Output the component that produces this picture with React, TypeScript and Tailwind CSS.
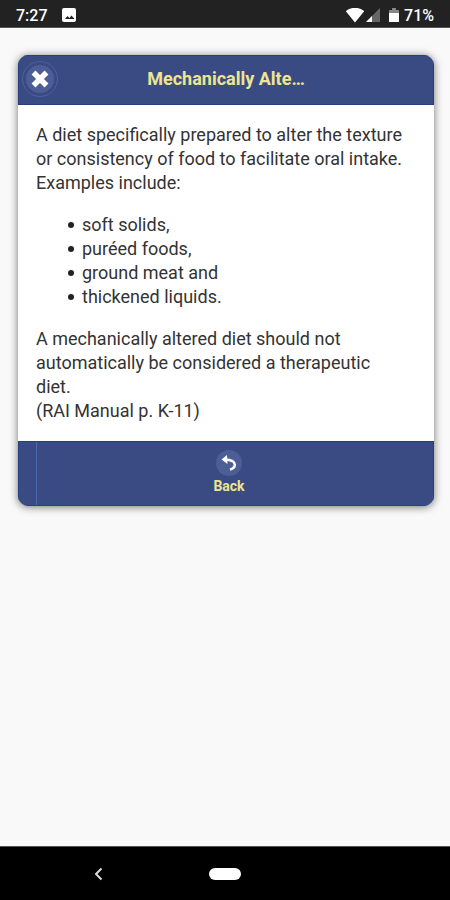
const examples = ['soft solids,', 'puréed foods,', 'ground meat and', 'thickened liquids.'];

function StatusBar() {
  return (
    <div className="flex h-7 items-center justify-between border-b border-[#555555] bg-[#222222] px-4 pt-1 text-base font-medium text-white">
      <div className="flex items-center gap-3">
        <span>7:27</span>
        <svg className="size-4" viewBox="0 0 16 16" aria-hidden="true">
          <rect x="2" y="0" width="14" height="14" rx="2" fill="#fff" />
          <path d="M5 11l2.500-3 2 2 2-2.500 3 3.500z" fill="#222" />
        </svg>
      </div>
      <div className="flex items-center gap-1">
        <svg className="h-4 w-5" viewBox="0 0 20 16" aria-hidden="true">
          <path d="M11 14.500L1.800 3.200C4.500.9 7.600-.2 11-.2s6.500 1.100 9.200 3.400z" fill="#fff" />
        </svg>
        <svg className="-ml-1 size-4" viewBox="0 0 16 16" aria-hidden="true">
          <path d="M16 0v14H2z" fill="#666" />
          <path d="M8 8v6H2z" fill="#fff" />
        </svg>
        <svg className="ml-1 h-4 w-3" viewBox="0 0 12 16" aria-hidden="true">
          <path d="M4 0h4v2h3v4H1V2h3z" fill="#888" />
          <path d="M1 5h10v9H1z" fill="#fff" />
        </svg>
        <span>71%</span>
      </div>
    </div>
  );
}

function NavBar() {
  return (
    <nav className="grid h-[54px] grid-cols-[1fr_auto_1fr] items-center border-t border-[#555555] bg-black">
      <button type="button" aria-label="Go back" className="justify-self-center pr-3">
        <svg className="h-4 w-3" viewBox="0 0 12 16" fill="none" stroke="#ddd" strokeWidth="2" aria-hidden="true">
          <path d="M8.500 2.500L3 8l5.500 5.500" />
        </svg>
      </button>
      <button type="button" aria-label="Home" className="h-3 w-8 rounded-full bg-white" />
    </nav>
  );
}

export default function App() {
  return (
    <div className="flex min-h-screen flex-col bg-[#f9f9f9] font-[Roboto,sans-serif]">
      <StatusBar />
      <main className="flex-1 pt-[27px] pr-4 pl-[18px]">
        <article className="overflow-hidden rounded-[10px] bg-white shadow-[0_1px_8px_rgba(0,0,0,0.55)]">
          <header className="grid h-[50px] grid-cols-[36px_1fr_36px] items-center border border-[#24417d] bg-[#3a4b84] px-[3px] pb-0.5">
            <button
              type="button"
              aria-label="Close"
              className="flex size-9 items-center justify-center rounded-full border border-[#4b61a0]"
            >
              <span className="flex size-7 items-center justify-center rounded-full bg-[#4d5d96]">
                <svg className="size-5" viewBox="0 0 20 20" aria-hidden="true">
                  <path d="M3.500 3.500l13 13M16.500 3.500l-13 13" stroke="#fff" strokeWidth="5.500" />
                </svg>
              </span>
            </button>
            <h1 className="text-center text-lg font-bold text-[#eee592]">Mechanically Alte…</h1>
          </header>

          <div className="py-[18px] pr-7 pl-[18px] text-lg leading-6 text-[#333333]">
            <p>
              A diet specifically prepared to alter the texture or consistency of food to facilitate oral intake.
              Examples include:
            </p>
            <ul className="my-[18px] pl-8">
              {examples.map((item) => (
                <li
                  key={item}
                  className="flex items-center gap-2 before:size-[6px] before:rounded-full before:bg-[#222222]"
                >
                  {item}
                </li>
              ))}
            </ul>
            <p>
              A mechanically altered diet should not automatically be considered a therapeutic diet.
              <br />
              (RAI Manual p. K-11)
            </p>
          </div>

          <footer className="flex h-[65px] border border-[#24417d] bg-[#3a4b84]">
            <div className="w-[18px] border-r border-[#4c69ad]" />
            <button
              type="button"
              className="flex flex-1 flex-col items-center pt-2 pr-3 text-sm font-bold text-[#eee592]"
            >
              <span className="flex size-[26px] items-center justify-center rounded-full bg-[#4d5d96]">
                <svg className="size-5" viewBox="0 0 20 20" aria-hidden="true">
                  <path d="M2.500 6.500L8 2l.5 9z" fill="#fff" />
                  <path
                    d="M6 6.500c4.500.2 9.500 1.300 9.800 5 .1 2.300-1.800 4.300-4.800 5"
                    fill="none"
                    stroke="#fff"
                    strokeWidth="2.500"
                  />
                </svg>
              </span>
              Back
            </button>
          </footer>
        </article>
      </main>
      <NavBar />
    </div>
  );
}
